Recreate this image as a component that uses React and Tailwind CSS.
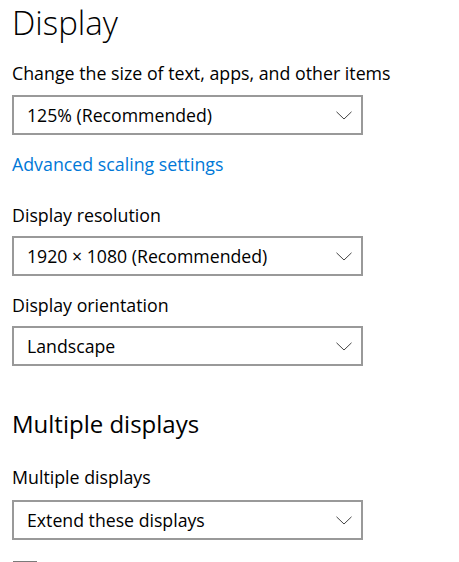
import React from "react";

function Chevron() {
  return (
    <svg width="16" height="9" viewBox="0 0 16 9" className="shrink-0">
      <path d="M0.5 0.8 L8 8 L15.5 0.8" fill="none" stroke="#444" strokeWidth="1" />
    </svg>
  );
}

function Select({ value, className = "" }) {
  return (
    <div
      className={`flex h-[40px] w-[351px] items-center justify-between border-2 border-[#999999] bg-white pl-[13px] pr-[9px] ${className}`}
    >
      <span className="text-[17.7px] leading-[36px] text-black">{value}</span>
      <Chevron />
    </div>
  );
}

export default function App() {
  return (
    <div
      className="h-[562px] w-[459px] overflow-hidden bg-white pl-[12px] text-black"
      style={{ fontFamily: '"Open Sans", "Noto Sans", sans-serif' }}
    >
      <h1 className="mt-[1px] text-[33px] font-light leading-[44px]">Display</h1>

      <div className="mt-[16px] text-[17.8px] leading-[24px]">
        Change the size of text, apps, and other items
      </div>
      <Select value="125% (Recommended)" className="mt-[10px]" />

      <div className="mt-[17px] text-[17.8px] leading-[24px] text-[#0078d7]">
        Advanced scaling settings
      </div>

      <div className="mt-[27px] text-[17.8px] leading-[24px]">Display resolution</div>
      <Select value="1920 × 1080 (Recommended)" className="mt-[9px]" />

      <div className="mt-[17px] text-[17.8px] leading-[24px]">Display orientation</div>
      <Select value="Landscape" className="mt-[9px]" />

      <h2 className="mt-[42px] text-[24px] font-normal leading-[32px]">Multiple displays</h2>

      <div className="mt-[25px] text-[17.8px] leading-[24px]">Multiple displays</div>
      <Select value="Extend these displays" className="mt-[11px]" />

      <div className="ml-[1px] mt-[21px] h-[24px] w-[24px] border-2 border-[#7a7a7a]" />
    </div>
  );
}
